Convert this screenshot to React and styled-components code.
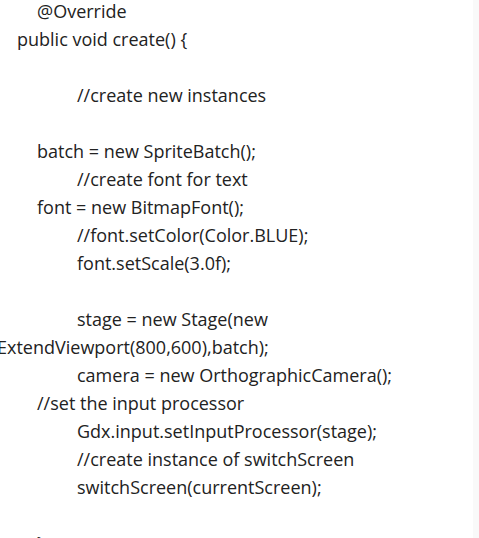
import styled, { createGlobalStyle } from "styled-components";

const GlobalStyle = createGlobalStyle`
  html, body {
    margin: 0;
    padding: 0;
    background: #ffffff;
    overflow: hidden;
  }
`;

const Page = styled.div`
  display: flex;
  width: 479px;
  height: 538px;
  overflow: hidden;
`;

const CodeBlock = styled.div`
  flex: 1;
  margin-top: -3px;
  font-family: "Open Sans", "Noto Sans", sans-serif;
  font-size: 18px;
  line-height: 28px;
  color: #222222;
`;

const Line = styled.div`
  height: 28px;
  white-space: nowrap;
  padding-left: ${({ $indent }) => $indent}px;
`;

const Gutter = styled.div`
  width: 6px;
  background: #f9f9f9;
`;

// indent in px, text
const lines = [
  [37, "@Override"],
  [17, "public void create() {"],
  [0, ""],
  [77, "//create new instances"],
  [0, ""],
  [37, "batch = new SpriteBatch();"],
  [77, "//create font for text"],
  [37, "font = new BitmapFont();"],
  [77, "//font.setColor(Color.BLUE);"],
  [77, "font.setScale(3.0f);"],
  [0, ""],
  [77, "stage = new Stage(new"],
  [-3, "ExtendViewport(800,600),batch);"],
  [77, "camera = new OrthographicCamera();"],
  [37, "//set the input processor"],
  [77, "Gdx.input.setInputProcessor(stage);"],
  [77, "//create instance of switchScreen"],
  [77, "switchScreen(currentScreen);"],
  [0, ""],
  [37, "}"],
];

export default function App() {
  return (
    <>
      <GlobalStyle />
      <Page>
        <CodeBlock>
          {lines.map(([indent, text], i) =>
            indent < 0 ? (
              <Line key={i} $indent={0} style={{ marginLeft: indent }}>
                {text}
              </Line>
            ) : (
              <Line key={i} $indent={indent}>
                {text}
              </Line>
            )
          )}
        </CodeBlock>
        <Gutter />
      </Page>
    </>
  );
}
